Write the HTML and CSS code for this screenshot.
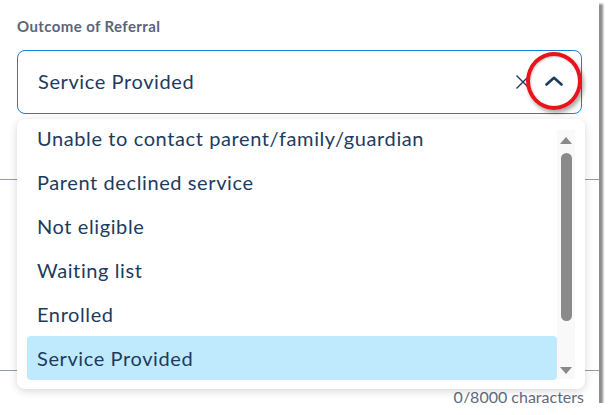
FILE: index.html
```html
<!DOCTYPE html>
<html lang="en">
<head>
    <meta charset="UTF-8">
    <meta name="viewport" content="width=device-width, initial-scale=1.0">
    <title>Outcome of Referral</title>
    <link rel="stylesheet" href="styles.css">
</head>
<body>
    <div class="frame">
        <p class="label">Outcome of Referral</p>

        <div class="select">
            <span class="value">Service Provided</span>
            <span class="clear">
                <svg width="16" height="16" viewBox="0 0 16 16"><path d="M1.5 1.5 L14.5 14.5 M14.5 1.5 L1.5 14.5" stroke="#1d3b5f" stroke-width="1.4" fill="none"/></svg>
            </span>
            <span class="toggle">
                <svg width="18" height="10" viewBox="0 0 18 10"><path d="M1.5 8.5 L9 1.8 L16.5 8.5" stroke="#1d3b5f" stroke-width="2.6" fill="none" stroke-linecap="round" stroke-linejoin="round"/></svg>
                <span class="ring"></span>
            </span>
        </div>

        <!-- notes field behind the open menu -->
        <div class="notes"></div>
        <p class="counter">0/8000 characters</p>

        <div class="menu">
            <ul class="options">
                <li>Unable to contact parent/family/guardian</li>
                <li>Parent declined service</li>
                <li>Not eligible</li>
                <li>Waiting list</li>
                <li>Enrolled</li>
                <li class="selected">Service Provided</li>
            </ul>
            <div class="scrollbar">
                <span class="arrow up"></span>
                <span class="thumb"></span>
                <span class="arrow down"></span>
            </div>
        </div>
    </div>
</body>
</html>
```

FILE: styles.css
```css
body {
    margin: 0;
    background-color: #fff;
    font-family: Lato, "Open Sans", sans-serif;
    color: #1d3b5f;
}
.frame {
    position: relative;
    width: 599px;
    height: 403px;
    padding: 0 17px;
    box-sizing: border-box;
    background-color: #fff;
    box-shadow: 4px 4px 2px rgba(0, 0, 0, 0.45);
    overflow: hidden;
}
.label {
    margin: 0;
    padding-top: 17px;
    height: 33px;
    font-size: 15px;
    font-weight: bold;
    letter-spacing: 0.4px;
    color: #5b6579;
}
.select {
    display: flex;
    align-items: center;
    height: 64px;
    border: 1px solid #1a7fd8;
    border-radius: 8px;
    box-sizing: border-box;
    padding: 0 18px 0 20px;
}
.value {
    flex: 1;
    font-size: 20px;
    letter-spacing: 0.6px;
    margin-top: -2px;
}
.clear {
    display: flex;
    margin-right: 14px;
}
.toggle {
    position: relative;
    display: flex;
    margin-top: -3px;
}
.ring {
    position: absolute;
    left: -19px;
    top: -24px;
    width: 48px;
    height: 50px;
    border: 4px solid #e8141c;
    border-radius: 50%;
    box-shadow: 2px 3px 4px rgba(0, 0, 0, 0.35), inset 1px 1px 2px rgba(0, 0, 0, 0.2);
}
.notes {
    margin: 65px -17px 0 -17px;
    height: 190px;
    border-top: 1px solid #8e9db3;
    border-bottom: 1px solid #8e9db3;
}
.counter {
    margin: 16px -2px 0 0;
    text-align: right;
    font-size: 16px;
    color: #5f6b80;
}
.menu {
    position: absolute;
    top: 119px;
    left: 17px;
    width: 568px;
    height: 270px;
    display: flex;
    padding: 0 10px;
    box-sizing: border-box;
    background-color: #fff;
    border-radius: 8px;
    box-shadow: 0 2px 8px rgba(0, 0, 0, 0.16);
    overflow: hidden;
}
.options {
    flex: 1;
    list-style: none;
    margin: -3px 0 0;
    padding: 0;
}
.options li {
    height: 44px;
    line-height: 44px;
    padding-left: 10px;
    font-size: 20px;
    letter-spacing: 0.6px;
    border-radius: 4px;
}
.options li.selected {
    background-color: #bfeafd;
}
.scrollbar {
    display: flex;
    flex-direction: column;
    align-items: center;
    width: 18px;
    margin: 11px 0 10px;
    background-color: #f9f9f9;
}
.arrow {
    width: 0;
    height: 0;
    border-left: 6px solid transparent;
    border-right: 6px solid transparent;
}
.arrow.up {
    margin-top: 7px;
    border-bottom: 7px solid #8a8a8a;
}
.arrow.down {
    margin-bottom: 5px;
    border-top: 7px solid #8a8a8a;
}
.thumb {
    width: 11px;
    height: 168px;
    margin: 9px 0 auto;
    background-color: #8a8a8a;
    border-radius: 6px;
}
```
